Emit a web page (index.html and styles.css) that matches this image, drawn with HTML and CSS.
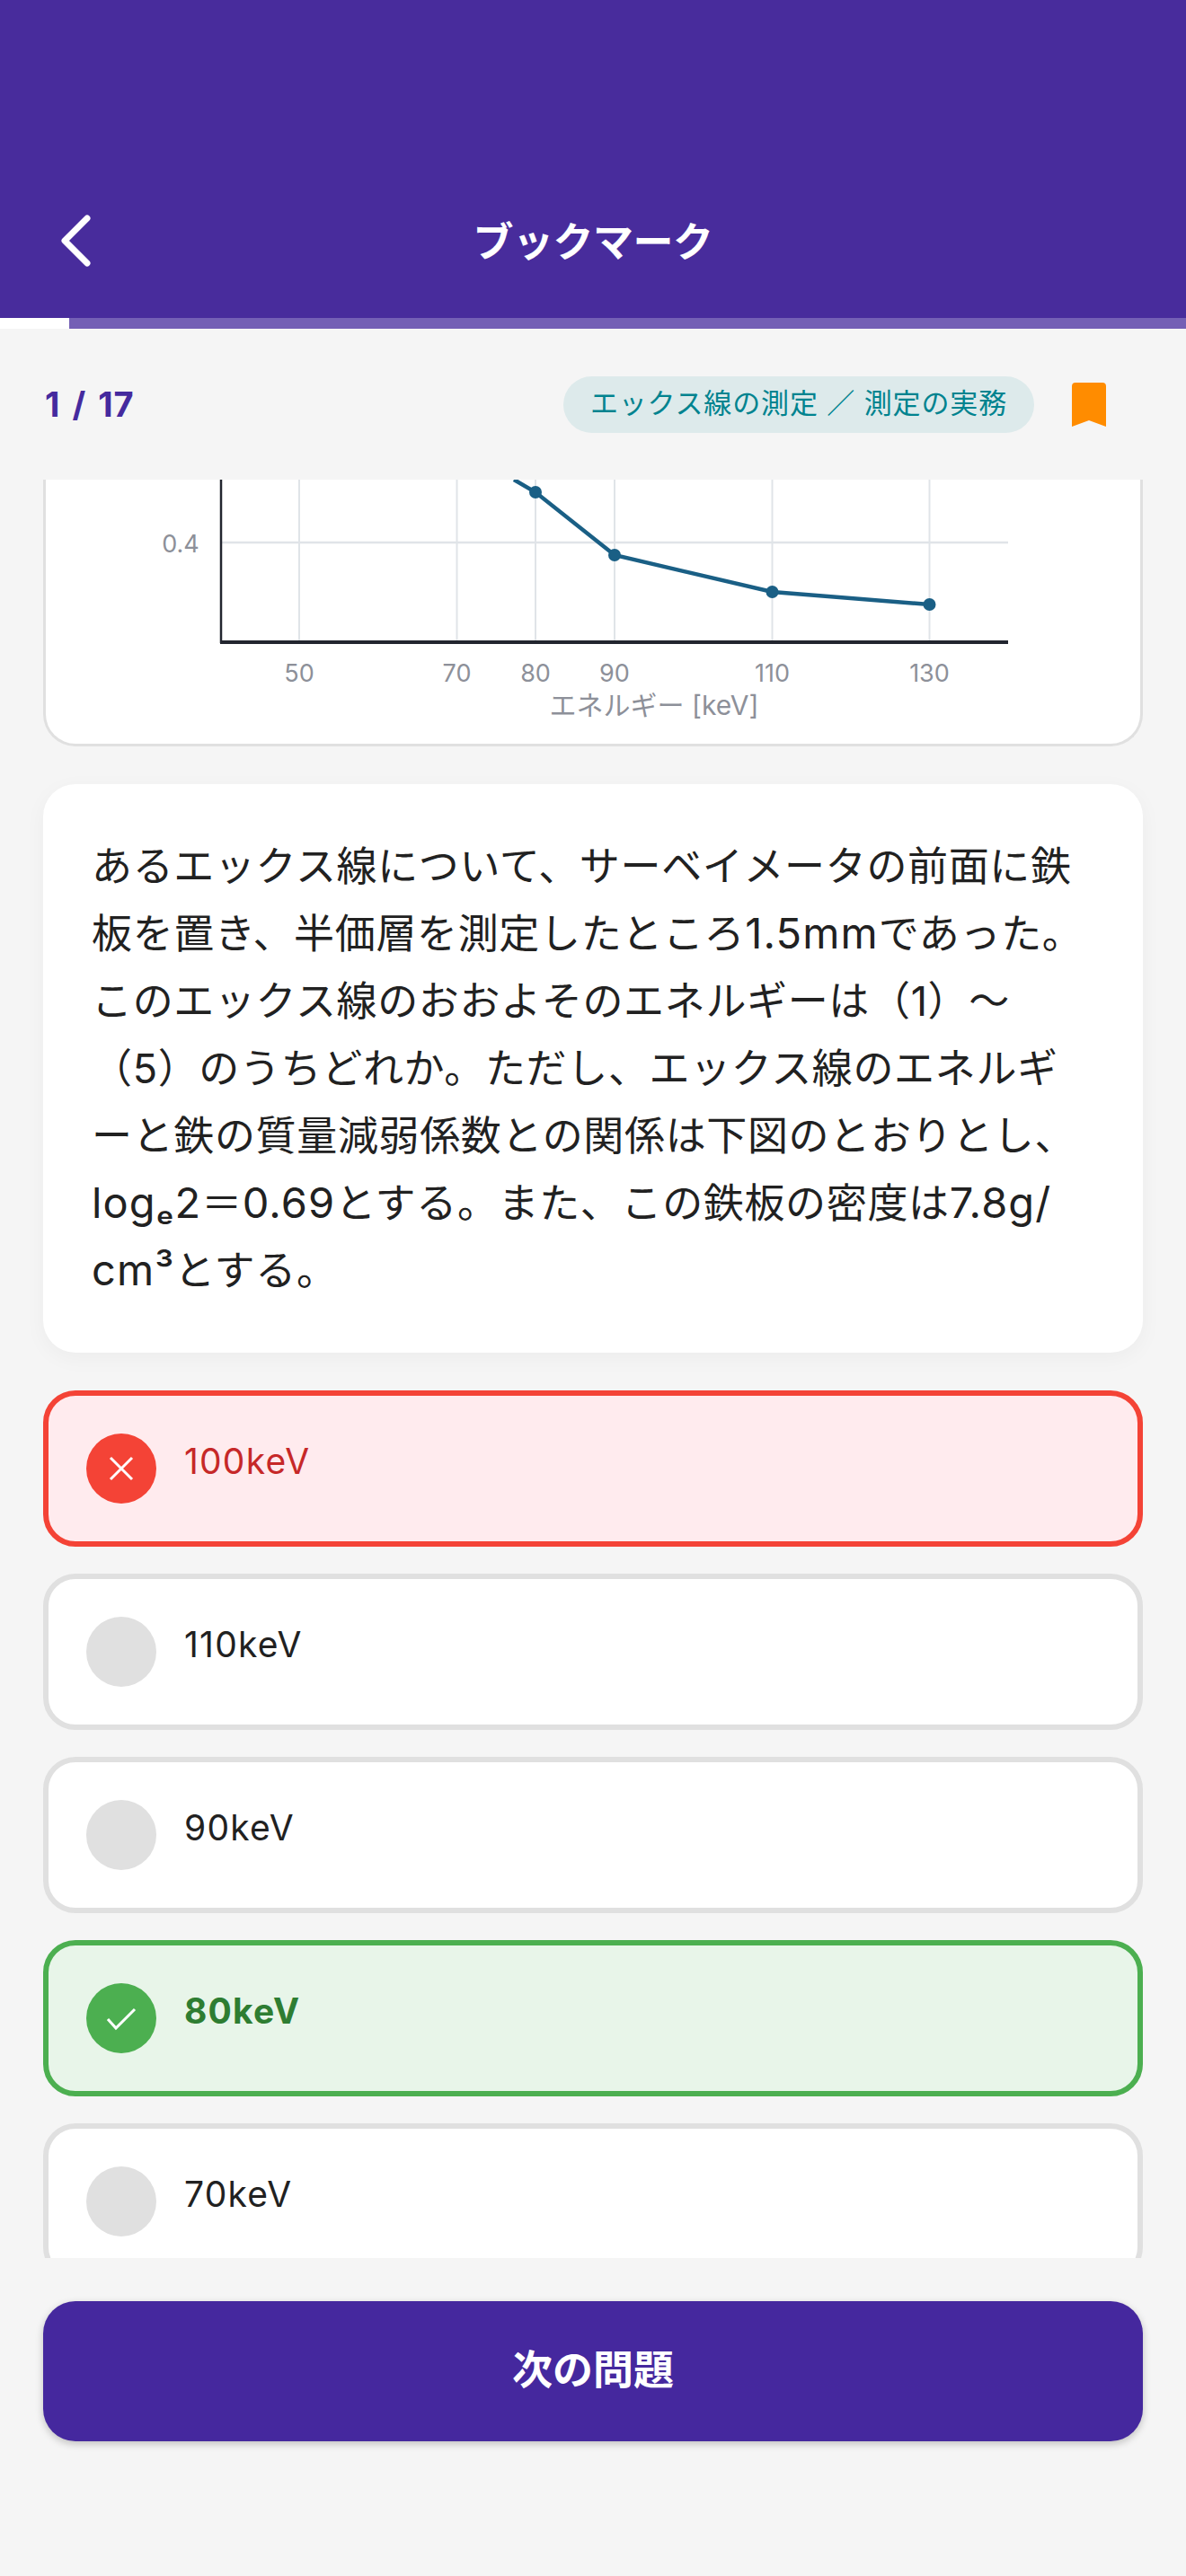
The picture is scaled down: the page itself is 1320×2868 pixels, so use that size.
FILE: index.html
```html
<!DOCTYPE html>
<html lang="ja">
  <head>
    <meta charset="UTF-8" />
    <meta name="viewport" content="width=device-width, initial-scale=1.0" />
    <title>ブックマーク</title>
    <link rel="stylesheet" href="styles.css">
  </head>
  <body>
    <div class="page">
      <div class="title-bar">
        <svg class="back" viewBox="0 0 40 64" aria-label="戻る">
          <path d="M33 7 L8 32 L33 57" />
        </svg>
        <h1>ブックマーク</h1>
      </div>
      <div class="progress"><div class="progress-done"></div></div>

      <div class="info">
        <span class="count">1 / 17</span>
        <span class="tag">エックス線の測定 ／ 測定の実務</span>
        <svg class="bookmark" viewBox="0 0 38 49" aria-label="ブックマーク済み">
          <path d="M0 4 Q0 0 4 0 L34 0 Q38 0 38 4 L38 49 L19 42 L0 49 Z" />
        </svg>
      </div>

      <div class="scroller">
        <div class="chart-card">
          <!-- viewBox uses page coordinates, the top of the chart is scrolled away -->
          <svg class="chart" viewBox="51 534 1218 294">
            <g class="grid">
              <line x1="333" y1="534" x2="333" y2="715" />
              <line x1="508.5" y1="534" x2="508.5" y2="715" />
              <line x1="596" y1="534" x2="596" y2="715" />
              <line x1="684" y1="534" x2="684" y2="715" />
              <line x1="859.5" y1="534" x2="859.5" y2="715" />
              <line x1="1034.5" y1="534" x2="1034.5" y2="715" />
              <line x1="246" y1="604" x2="1122" y2="604" />
            </g>
            <line class="axis" x1="246" y1="534" x2="246" y2="716" />
            <line class="axis axis-x" x1="245" y1="715" x2="1122" y2="715" />
            <polyline class="curve" points="572,534 596,548 684,618 859.5,659 1034.5,673" />
            <g class="dots">
              <circle cx="596" cy="548" r="7" />
              <circle cx="684" cy="618" r="7" />
              <circle cx="859.5" cy="659" r="7" />
              <circle cx="1034.5" cy="673" r="7" />
            </g>
            <g class="labels">
              <text x="201" y="615">0.4</text>
              <text x="333" y="759">50</text>
              <text x="508.5" y="759">70</text>
              <text x="596" y="759">80</text>
              <text x="684" y="759">90</text>
              <text x="859.5" y="759">110</text>
              <text x="1034.5" y="759">130</text>
              <text class="axis-title" x="728" y="796">エネルギー [keV]</text>
            </g>
          </svg>
        </div>

        <div class="question">
          あるエックス線について、サーベイメータの前面に鉄<br>板を置き、半価層を測定したところ<span class="latin">1.5mm</span>であった。<br>このエックス線のおおよそのエネルギーは（1）～<br>（5）のうちどれか。ただし、エックス線のエネルギ<br>ーと鉄の質量減弱係数との関係は下図のとおりとし、<br><span class="latin">logₑ2</span>＝<span class="latin">0.69</span>とする。また、この鉄板の密度は<span class="latin">7.8g/</span><br><span class="latin">cm³</span>とする。
        </div>

        <div class="option wrong">
          <svg class="mark" viewBox="0 0 78 78">
            <circle cx="39" cy="39" r="39" />
            <path d="M27 27 L51 51 M51 27 L27 51" />
          </svg>
          <span class="option-text">100keV</span>
        </div>
        <div class="option">
          <svg class="mark" viewBox="0 0 78 78"><circle cx="39" cy="39" r="39" /></svg>
          <span class="option-text">110keV</span>
        </div>
        <div class="option">
          <svg class="mark" viewBox="0 0 78 78"><circle cx="39" cy="39" r="39" /></svg>
          <span class="option-text">90keV</span>
        </div>
        <div class="option right">
          <svg class="mark" viewBox="0 0 78 78">
            <circle cx="39" cy="39" r="39" />
            <path d="M24 40 L33 50 L54 29" />
          </svg>
          <span class="option-text">80keV</span>
        </div>
        <div class="option">
          <svg class="mark" viewBox="0 0 78 78"><circle cx="39" cy="39" r="39" /></svg>
          <span class="option-text">70keV</span>
        </div>
      </div>

      <div class="button-bar">
        <button id="next">次の問題</button>
      </div>
    </div>
  </body>
</html>
```

FILE: styles.css
```css
* {
  margin: 0;
  padding: 0;
  box-sizing: border-box;
}
body {
  width: 1320px;
  height: 2868px;
  background-color: #f5f5f5;
  font-family: Inter, "Noto Sans CJK JP", sans-serif;
  color: #212121;
  overflow: hidden;
}
.page {
  height: 100%;
  display: flex;
  flex-direction: column;
}
.title-bar {
  height: 354px;
  padding-top: 182px;
  background-color: #482c9c;
  display: grid;
  grid-template-columns: 1fr auto 1fr;
  align-items: center;
}
.title-bar h1 {
  grid-column: 2;
  margin-top: -3px;
  color: white;
  font-size: 45px;
  font-weight: 700;
  letter-spacing: -0.5px;
}
.back {
  grid-column: 1;
  grid-row: 1;
  width: 40px;
  height: 64px;
  margin-left: 64px;
  fill: none;
  stroke: white;
  stroke-width: 7;
  stroke-linecap: round;
  stroke-linejoin: round;
}
.progress {
  height: 12px;
  background-color: #7460b5;
}
.progress-done {
  width: 77px;
  height: 100%;
  background-color: white;
}
.info {
  height: 168px;
  padding: 0 89px 0 50px;
  display: flex;
  align-items: center;
}
.count {
  margin-right: auto;
  color: #452a9e;
  font-size: 38px;
  font-weight: 700;
  letter-spacing: 1px;
  word-spacing: 3px;
}
.tag {
  height: 63px;
  padding: 0 30px;
  border-radius: 32px;
  background-color: #ddeaeb;
  color: #00838f;
  font-size: 31px;
  line-height: 60px;
  letter-spacing: 0.85px;
}
.bookmark {
  width: 38px;
  height: 49px;
  margin-left: 42px;
  fill: #ff8c00;
}
.scroller {
  flex: 1;
  min-height: 0;
  padding: 0 48px;
  overflow: hidden;
}
.chart-card {
  height: 297px;
  border: 3px solid #e0e0e0;
  border-top: none;
  border-radius: 0 0 36px 36px;
  background-color: white;
}
.chart {
  display: block;
  width: 100%;
  height: 294px;
}
.grid line {
  stroke: #e0e4e8;
  stroke-width: 2;
}
.grid line:last-child {
  stroke-width: 2.5;
}
.axis {
  stroke: #22252f;
  stroke-width: 2.5;
}
.axis-x {
  stroke-width: 4;
}
.curve {
  fill: none;
  stroke: #1a5f85;
  stroke-width: 4.5;
}
.dots {
  fill: #1a5f85;
}
.labels {
  fill: #8d9099;
  font-size: 27px;
  text-anchor: middle;
}
.axis-title {
  font-size: 30px;
}
.question {
  margin-top: 42px;
  padding: 54px 54px;
  border-radius: 36px;
  background-color: white;
  box-shadow: 0 6px 24px rgba(0, 0, 0, 0.04);
  font-size: 45px;
  line-height: 75px;
  letter-spacing: 0.65px;
  white-space: nowrap;
}
.latin {
  font-size: 47px;
  line-height: 1;
  letter-spacing: 1.1px;
}
.option {
  height: 174px;
  margin-top: 30px;
  padding-left: 42px;
  border: 6px solid #e0e0e0;
  border-radius: 36px;
  background-color: white;
  display: flex;
  align-items: center;
  gap: 31px;
}
.question + .option {
  margin-top: 42px;
}
.mark {
  flex: none;
  width: 78px;
  height: 78px;
  fill: #e0e0e0;
}
.mark path {
  fill: none;
  stroke: white;
  stroke-width: 3;
}
.option-text {
  margin-bottom: 16px;
  font-size: 39px;
  line-height: 60px;
  letter-spacing: 1.2px;
}
.wrong {
  border-color: #f44336;
  background-color: #ffebee;
}
.wrong .mark {
  fill: #f44336;
}
.wrong .option-text {
  color: #c62828;
}
.right {
  border-color: #4caf50;
  background-color: #e8f5e9;
}
.right .mark {
  fill: #4caf50;
}
.right .option-text {
  color: #2e7d32;
  font-weight: 700;
}
.button-bar {
  height: 354px;
  padding: 48px 48px 0;
}
#next {
  width: 100%;
  height: 156px;
  padding-bottom: 10px;
  border: none;
  border-radius: 36px;
  background-color: #45289e;
  box-shadow: 0 3px 9px rgba(0, 0, 0, 0.22);
  color: white;
  font-family: inherit;
  font-size: 45px;
  font-weight: 700;
}
```
